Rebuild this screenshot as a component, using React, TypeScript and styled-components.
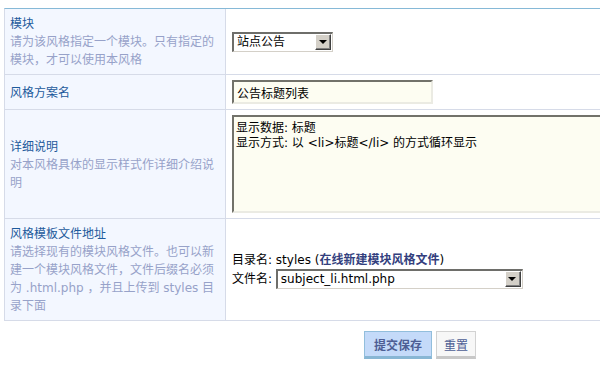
import { FC, ReactNode } from "react";
import styled, { createGlobalStyle } from "styled-components";

const GlobalStyle = createGlobalStyle`
  html, body {
    margin: 0;
    padding: 0;
    background: #fff;
    overflow: hidden;
  }
  body {
    font-family: "DejaVu Sans", "Noto Sans CJK SC", sans-serif;
    font-size: 12px;
    color: #000;
  }
`;

const Page = styled.form`
  width: 832px;
  padding: 8px 0 0 4px;
`;

const Table = styled.div`
  border-top: 1px solid #86b9d7;
  border-left: 1px solid #d6dbe8;
`;

const Row = styled.div`
  display: grid;
  grid-template-columns: 221px 1fr;
  border-bottom: 1px solid #d6dbe8;
`;

const LabelCell = styled.div`
  box-sizing: border-box;
  background: #f3f7ff;
  border-right: 1px solid #d6dbe8;
  padding: 6px 5px 5px 5px;
  display: flex;
  flex-direction: column;
  justify-content: center;
  line-height: 18px;
`;

const Title = styled.div`
  color: #1d5a9c;
`;

const Desc = styled.div`
  color: #97a2c9;
`;

const ValueCell = styled.div`
  padding: 5px 6px 5px 6px;
  display: flex;
  flex-direction: column;
  justify-content: center;
  align-items: flex-start;
`;

const SelectBox = styled.div<{ $width: number }>`
  box-sizing: border-box;
  width: ${(p) => p.$width}px;
  height: 20px;
  display: flex;
  align-items: center;
  background: #fff;
  border-top: 2px solid #6e6e6a;
  border-left: 2px solid #6e6e6a;
  border-right: 1px solid #d4d0c8;
  border-bottom: 1px solid #d4d0c8;
`;

const SelectText = styled.span`
  flex: 1;
  padding-left: 3px;
  white-space: nowrap;
  overflow: hidden;
  line-height: 16px;
`;

const ArrowButton = styled.span`
  box-sizing: border-box;
  width: 16px;
  height: 16px;
  margin-right: 1px;
  background: #d4d0c8;
  border-top: 1px solid #fff;
  border-left: 1px solid #fff;
  border-right: 1px solid #404040;
  border-bottom: 1px solid #404040;
  box-shadow: inset -1px -1px 0 #808080;
  display: flex;
  align-items: center;
  justify-content: center;

  &::after {
    content: "";
    width: 0;
    height: 0;
    border-left: 4px solid transparent;
    border-right: 4px solid transparent;
    border-top: 4px solid #000;
    margin-right: 1px;
  }
`;

const TextInput = styled.input`
  box-sizing: border-box;
  width: 201px;
  height: 24px;
  margin: 0;
  padding: 0 3px;
  background: #fdfdf2;
  border-top: 2px solid #72726a;
  border-left: 2px solid #72726a;
  border-right: 2px solid #ebebe3;
  border-bottom: 2px solid #ebebe3;
  font: inherit;
  color: #000;
  outline: none;
`;

const TextArea = styled.textarea`
  box-sizing: border-box;
  width: 440px;
  height: 98px;
  margin: 0;
  padding: 4px 2px;
  background: #fdfdf2;
  border-top: 2px solid #72726a;
  border-left: 2px solid #72726a;
  border-right: 2px solid #ebebe3;
  border-bottom: 2px solid #ebebe3;
  font: inherit;
  line-height: 15px;
  color: #000;
  resize: none;
  outline: none;
`;

const Line = styled.div`
  display: flex;
  align-items: center;
  line-height: 18px;
  white-space: nowrap;
`;

const NewLink = styled.a`
  color: #333f7e;
  font-weight: bold;
  text-decoration: none;
`;

const Buttons = styled.div`
  display: flex;
  justify-content: center;
  gap: 4px;
  margin-top: 10px;
`;

const Button = styled.button<{ $primary?: boolean }>`
  box-sizing: border-box;
  height: 28px;
  margin: 0;
  padding: 0 ${(p) => (p.$primary ? 9 : 7)}px;
  font-family: "DejaVu Sans", "Noto Sans CJK SC", sans-serif;
  font-size: 12px;
  font-weight: ${(p) => (p.$primary ? "bold" : "normal")};
  color: #4d5e94;
  background: ${(p) => (p.$primary ? "#c4daf9" : "#f7f7f7")};
  border: 1px solid ${(p) => (p.$primary ? "#92bedc" : "#d2d2d2")};
  border-bottom: 3px solid ${(p) => (p.$primary ? "#88b6d4" : "#c8c8c8")};
  cursor: pointer;
`;

const FakeSelect: FC<{ width: number; children: ReactNode }> = ({ width, children }) => (
  <SelectBox $width={width}>
    <SelectText>{children}</SelectText>
    <ArrowButton />
  </SelectBox>
);

const App: FC = () => {
  return (
    <>
      <GlobalStyle />
      <Page onSubmit={(e) => e.preventDefault()}>
        <Table>
          <Row>
            <LabelCell>
              <Title>模块</Title>
              <Desc>请为该风格指定一个模块。只有指定的模块，才可以使用本风格</Desc>
            </LabelCell>
            <ValueCell>
              <FakeSelect width={101}>站点公告</FakeSelect>
            </ValueCell>
          </Row>
          <Row>
            <LabelCell>
              <Title>风格方案名</Title>
            </LabelCell>
            <ValueCell>
              <TextInput defaultValue="公告标题列表" />
            </ValueCell>
          </Row>
          <Row>
            <LabelCell>
              <Title>详细说明</Title>
              <Desc>对本风格具体的显示样式作详细介绍说明</Desc>
            </LabelCell>
            <ValueCell>
              <TextArea
                defaultValue={"显示数据: 标题\n显示方式: 以 <li>标题</li> 的方式循环显示"}
              />
            </ValueCell>
          </Row>
          <Row>
            <LabelCell>
              <Title>风格模板文件地址</Title>
              <Desc>
                请选择现有的模块风格文件。也可以新建一个模块风格文件，文件后缀名必须为 .html.php ，并且上传到 styles 目录下面
              </Desc>
            </LabelCell>
            <ValueCell>
              <Line>
                目录名: styles (<NewLink href="#">在线新建模块风格文件</NewLink>)
              </Line>
              <Line>
                文件名:&nbsp;
                <FakeSelect width={247}>subject_li.html.php</FakeSelect>
              </Line>
            </ValueCell>
          </Row>
        </Table>
        <Buttons>
          <Button type="submit" $primary>提交保存</Button>
          <Button type="reset">重置</Button>
        </Buttons>
      </Page>
    </>
  );
};

export default App;
